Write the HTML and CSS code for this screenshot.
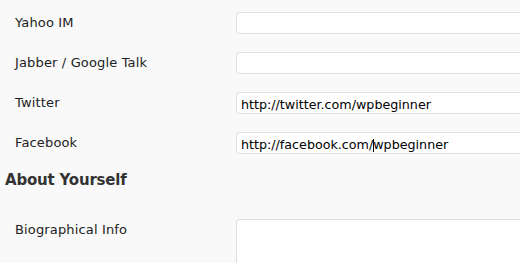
FILE: index.html
```html
<!DOCTYPE html>
<html>
<head>
<meta charset="utf-8">
<link rel="stylesheet" href="styles.css">
</head>
<body>
<div class="page">
  <div class="row">
    <div class="label">Yahoo IM</div>
    <div class="field"><div class="input"></div></div>
  </div>
  <div class="row">
    <div class="label">Jabber / Google Talk</div>
    <div class="field"><div class="input"></div></div>
  </div>
  <div class="row">
    <div class="label">Twitter</div>
    <div class="field"><div class="input">http://twitter.com/wpbeginner</div></div>
  </div>
  <div class="row">
    <div class="label">Facebook</div>
    <div class="field"><div class="input">http://facebook.com/<span class="caret"></span>wpbeginner</div></div>
  </div>
  <h3 class="heading">About Yourself</h3>
  <div class="row bio">
    <div class="label">Biographical Info</div>
    <div class="field"><div class="textarea"></div></div>
  </div>
</div>
</body>
</html>
```
FILE: styles.css
```css
html, body {
  margin: 0;
  padding: 0;
  background: #f9f9f9;
  overflow: hidden;
}
.page {
  width: 520px;
  height: 263px;
  padding-top: 2px;
  box-sizing: border-box;
  overflow: hidden;
  font-family: "DejaVu Sans", Verdana, sans-serif;
  color: #333;
}
.row {
  display: flex;
  height: 40px;
}
.label {
  width: 221px;
  flex: none;
  padding-left: 15px;
  padding-top: 13px;
  font-size: 13px;
  letter-spacing: 0.15px;
  line-height: 16px;
  color: #222;
}
.field {
  padding-top: 10px;
}
.input {
  width: 320px;
  height: 22px;
  box-sizing: border-box;
  background: #fff;
  border: 1px solid #dfdfdf;
  border-radius: 3px;
  padding: 2px 4px 0;
  font-size: 12.7px;
  line-height: 19px;
  color: #000;
  white-space: nowrap;
}
.caret {
  display: inline-block;
  width: 1px;
  height: 13px;
  background: #000;
  vertical-align: -3px;
  margin-right: -1px;
}
.heading {
  margin: 0;
  padding: 8px 0 0 5px;
  height: 57px;
  box-sizing: border-box;
  font-size: 15px;
  letter-spacing: -0.2px;
  line-height: 20px;
  font-weight: bold;
  color: #333;
}
.bio .field {
  padding-top: 0;
}
.bio .label {
  padding-top: 3px;
}
.textarea {
  width: 320px;
  height: 80px;
  box-sizing: border-box;
  background: #fff;
  border: 1px solid #dfdfdf;
  border-radius: 3px;
}
```
